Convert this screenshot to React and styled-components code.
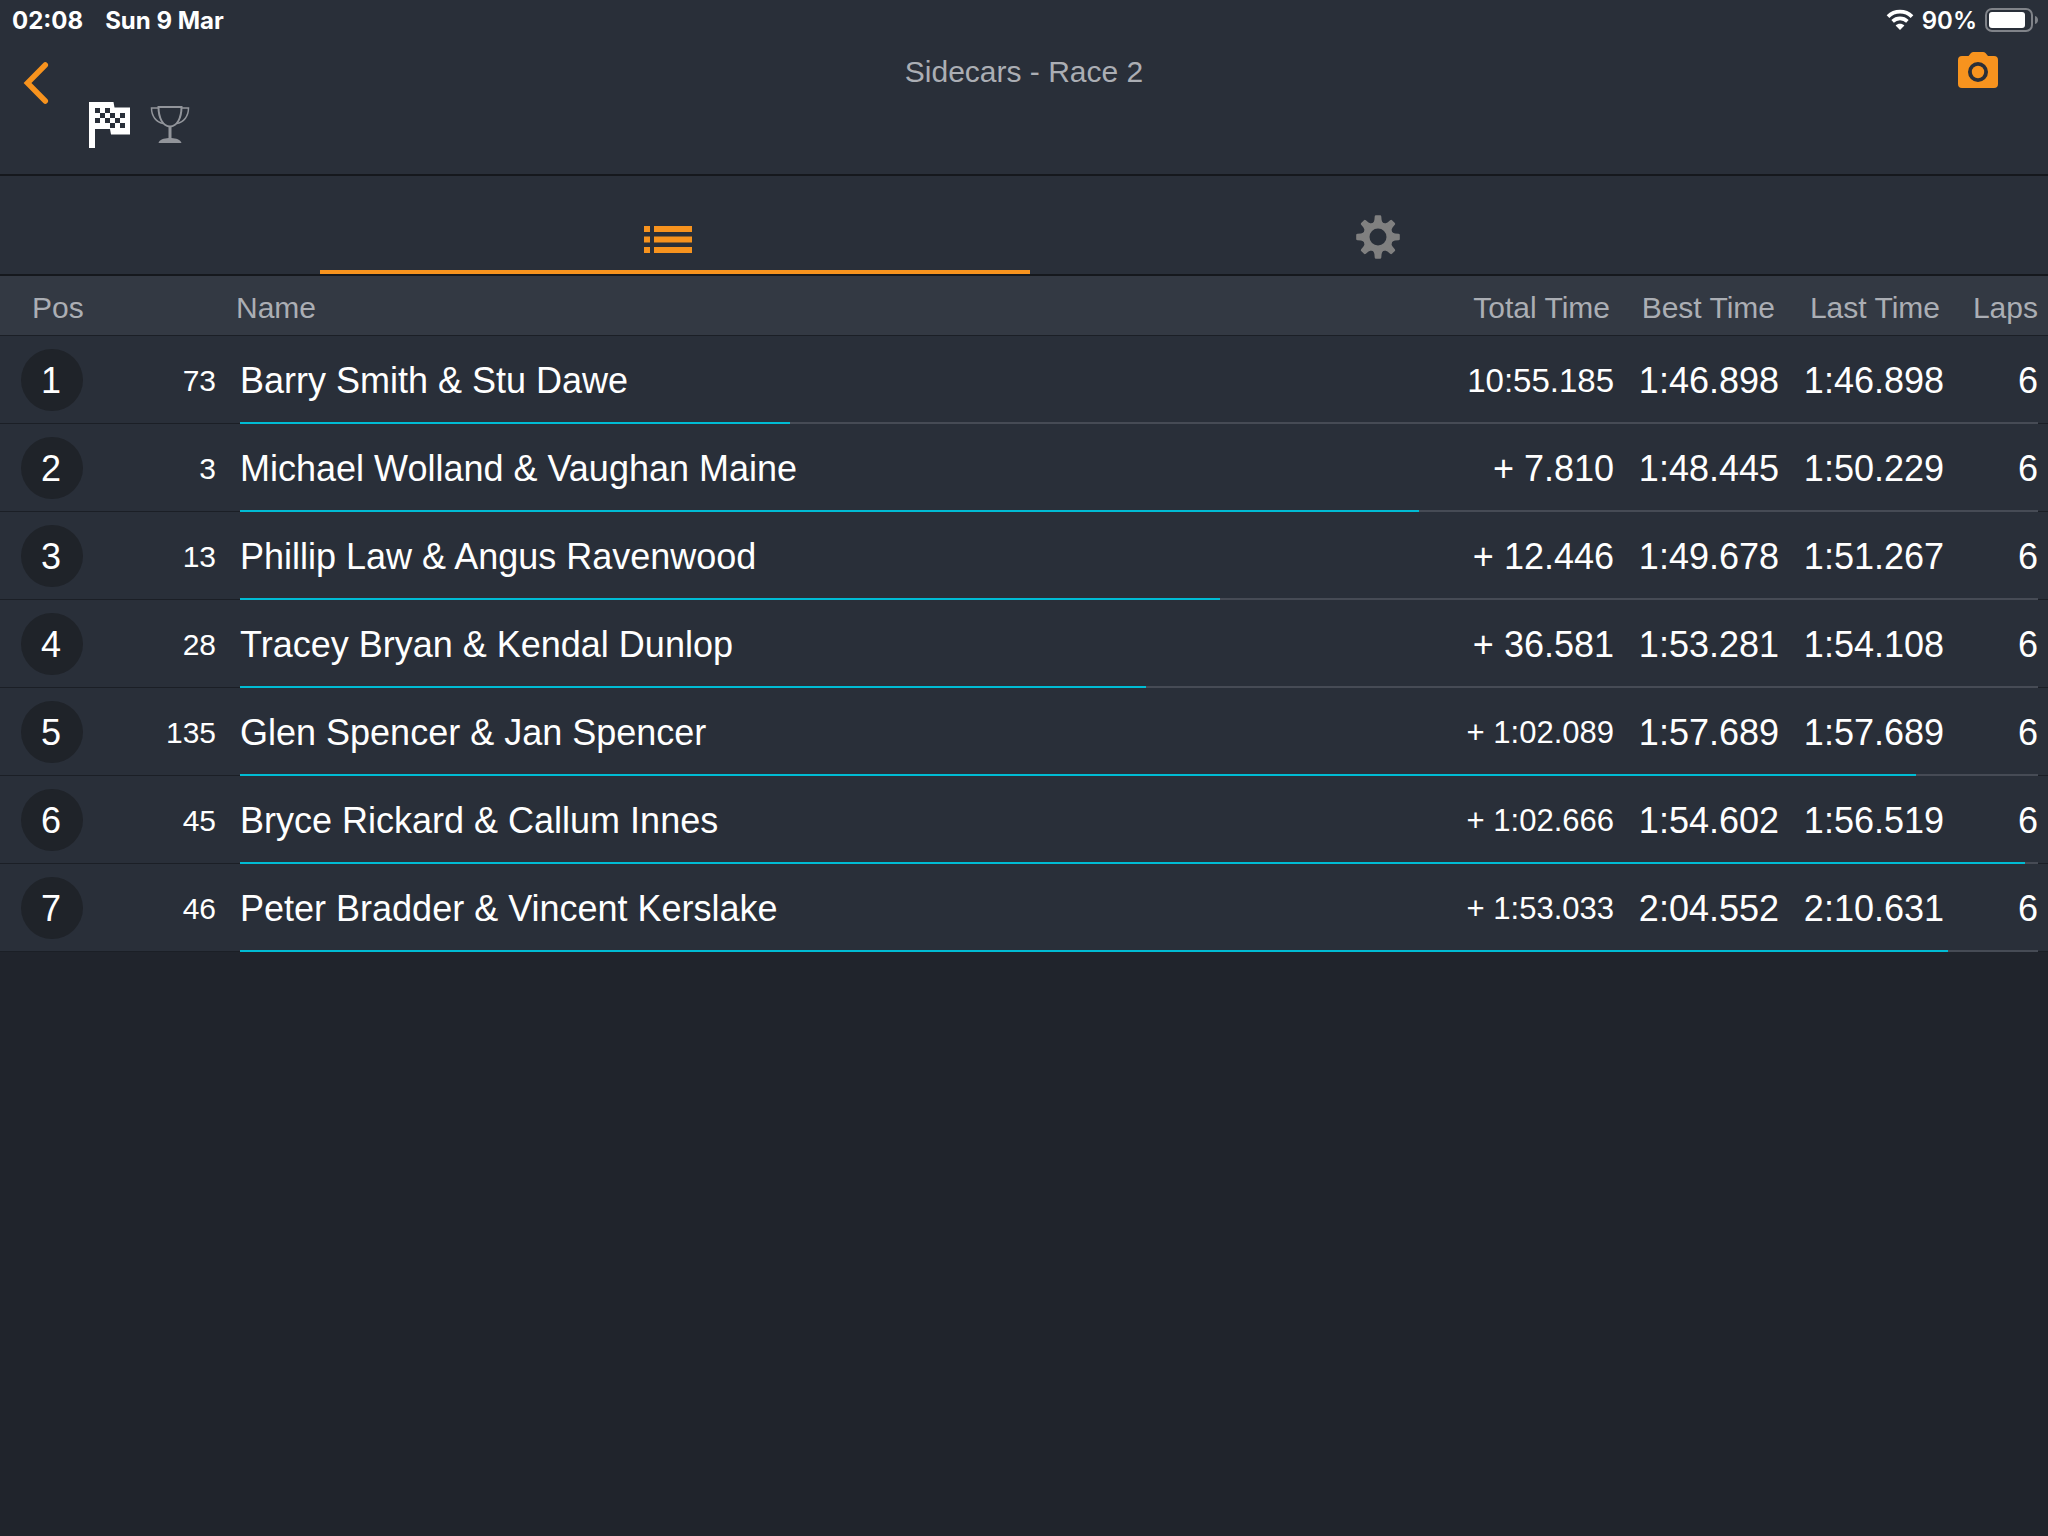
import styled, { createGlobalStyle } from "styled-components";

const results = [
  { pos: 1, no: 73, name: "Barry Smith & Stu Dawe", total: "10:55.185", best: "1:46.898", last: "1:46.898", laps: 6, progress: 30.6 },
  { pos: 2, no: 3, name: "Michael Wolland & Vaughan Maine", total: "+ 7.810", best: "1:48.445", last: "1:50.229", laps: 6, progress: 65.6 },
  { pos: 3, no: 13, name: "Phillip Law & Angus Ravenwood", total: "+ 12.446", best: "1:49.678", last: "1:51.267", laps: 6, progress: 54.5 },
  { pos: 4, no: 28, name: "Tracey Bryan & Kendal Dunlop", total: "+ 36.581", best: "1:53.281", last: "1:54.108", laps: 6, progress: 50.4 },
  { pos: 5, no: 135, name: "Glen Spencer & Jan Spencer", total: "+ 1:02.089", best: "1:57.689", last: "1:57.689", laps: 6, progress: 93.2 },
  { pos: 6, no: 45, name: "Bryce Rickard & Callum Innes", total: "+ 1:02.666", best: "1:54.602", last: "1:56.519", laps: 6, progress: 99.3 },
  { pos: 7, no: 46, name: "Peter Bradder & Vincent Kerslake", total: "+ 1:53.033", best: "2:04.552", last: "2:10.631", laps: 6, progress: 95 },
];

// longer gaps get a smaller font so they stay inside the column
const totalSize = (total) => {
  if (total.length > 9) return 31;
  if (total.length > 8) return 33;
  return 36;
};

const WifiIcon = () => (
  <svg width="28" height="22" viewBox="0 0 28 22" fill="none" aria-hidden="true">
    <path d="M2 7.6C8.7 1 19.3 1 26 7.6" stroke="#fff" strokeWidth="3.8" />
    <path d="M6.6 12.4C10.8 8.4 17.2 8.4 21.4 12.4" stroke="#fff" strokeWidth="3.6" />
    <path d="M14 21L9.6 16.6C12 14.2 16 14.2 18.4 16.6Z" fill="#fff" />
  </svg>
);

const BatteryIcon = () => (
  <svg width="54" height="24" viewBox="0 0 54 24" aria-hidden="true">
    <rect x="1" y="1" width="46" height="22" rx="6" fill="none" stroke="#808389" strokeWidth="2" />
    <rect x="4" y="4" width="36" height="16" rx="3" fill="#fff" />
    <path d="M50 8C54 9 54 15 50 16Z" fill="#808389" />
  </svg>
);

const BackIcon = () => (
  <svg width="26" height="44" viewBox="0 0 26 44" fill="none">
    <path d="M22.3 4L4.5 22L22.3 40" stroke="#f7931e" strokeWidth="5.5" strokeLinecap="round" />
  </svg>
);

const CameraIcon = () => (
  <svg width="40" height="36" viewBox="0 0 40 36">
    <path
      fill="#f7931e"
      fillRule="evenodd"
      d="M4 4H10.5L13 1Q14 0 15.500 0H25Q26.500 0 27.500 1L30 4H36A4 4 0 0 1 40 8V32A4 4 0 0 1 36 36H4A4 4 0 0 1 0 32V8A4 4 0 0 1 4 4ZM20 10A10 10 0 1 0 20 30A10 10 0 1 0 20 10Z"
    />
    <circle cx="20" cy="20" r="6.200" fill="#f7931e" />
  </svg>
);

const FlagIcon = () => (
  <svg width="41" height="46" viewBox="0 0 41 46">
    <path d="M0 0H24.500L25.500 5.500H41V32.500H22L21 27H6V46H0Z" fill="#fff" />
    <path
      fill="#292f39"
      shapeRendering="crispEdges"
      d="M6 6h5v5h-5zM16 6h5v5h-5zM11 11h5v5h-5zM21 11h5v5h-5zM31 11h5v5h-5zM6 16h5v5h-5zM16 16h5v5h-5zM26 16h5v5h-5zM21 21h5v5h-5zM31 21h5v5h-5z"
    />
  </svg>
);

const TrophyIcon = () => (
  <svg width="40" height="38" viewBox="0 0 40 38" fill="none">
    <path d="M8.500 1H31.500C31.500 12 27 20.500 20 20.500S8.500 12 8.500 1Z" stroke="#92959b" strokeWidth="2" />
    <path d="M8.500 2H1.500C1.500 10 6 16 13 17.500M31.500 2H38.500C38.500 10 34 16 27 17.500" stroke="#92959b" strokeWidth="1.500" />
    <path d="M18.500 20H21.500V32C26 32.300 30.500 33.500 31.500 37H8.500C9.500 33.500 14 32.300 18.500 32Z" fill="#92959b" />
  </svg>
);

const ListIcon = () => (
  <svg width="48" height="31" viewBox="0 -4 48 31" fill="#f7931e">
    <path d="M0 0h6v6H0zM10 0h38v6H10zM0 10.500h6v6H0zM10 10.500h38v6H10zM0 21h6v6H0zM10 21h38v6H10z" />
  </svg>
);

const GearIcon = () => (
  <svg width="44" height="44" viewBox="-22 -22 44 44">
    <g fill="#808080">
      {[0, 45, 90, 135].map((angle) => (
        <path
          key={angle}
          transform={`rotate(${angle})`}
          d="M-6 -13Q-3.800 -15 -3.600 -17L-3.300 -20.500Q-3.200 -21.800 -2 -21.800H2Q3.200 -21.800 3.300 -20.500L3.600 -17Q3.800 -15 6 -13V13Q3.800 15 3.600 17L3.300 20.500Q3.200 21.800 2 21.800H-2Q-3.200 21.800 -3.300 20.500L-3.600 17Q-3.800 15 -6 13Z"
        />
      ))}
      <circle r="15" />
    </g>
    <circle r="8.500" fill="#292f39" />
  </svg>
);

const App = () => {
  return (
    <Page>
      <GlobalStyle />
      <StatusBar>
        <span>02:08</span>
        <span>Sun 9 Mar</span>
        <StatusRight>
          <WifiIcon />
          <span>90%</span>
          <BatteryIcon />
        </StatusRight>
      </StatusBar>
      <Header>
        <HeaderSide>
          <IconButton aria-label="Back">
            <BackIcon />
          </IconButton>
          <Badges>
            <FlagIcon />
            <TrophyIcon />
          </Badges>
        </HeaderSide>
        <Title>Sidecars - Race 2</Title>
        <HeaderEnd>
          <IconButton aria-label="Take a photo">
            <CameraIcon />
          </IconButton>
        </HeaderEnd>
      </Header>
      <Tabs>
        <Tab $active aria-label="Results">
          <ListIcon />
        </Tab>
        <Tab aria-label="Settings">
          <GearIcon />
        </Tab>
      </Tabs>
      <Table>
        <colgroup>
          <Col $width={120} />
          <Col $width={120} />
          <Col />
          <Col $width={180} />
          <Col $width={165} />
          <Col $width={165} />
          <Col $width={94} />
        </colgroup>
        <thead>
          <HeadRow>
            <PosHead colSpan={2}>Pos</PosHead>
            <NameHead>
              <NameLabel>Name</NameLabel>
            </NameHead>
            <Head>Total Time</Head>
            <Head>Best Time</Head>
            <Head>Last Time</Head>
            <LapsHead>Laps</LapsHead>
          </HeadRow>
        </thead>
        <tbody>
          {results.map((r) => (
            <Row key={r.pos}>
              <PosCell>
                <Position>{r.pos}</Position>
              </PosCell>
              <NumberCell>{r.no}</NumberCell>
              <Cell>
                {r.name}
                <Track>
                  <Progress style={{ width: `${r.progress}%` }} />
                </Track>
              </Cell>
              <ValueCell $size={totalSize(r.total)}>{r.total}</ValueCell>
              <ValueCell>{r.best}</ValueCell>
              <ValueCell>{r.last}</ValueCell>
              <ValueCell>{r.laps}</ValueCell>
            </Row>
          ))}
        </tbody>
      </Table>
    </Page>
  );
};

export default App;

const GlobalStyle = createGlobalStyle`
  * {
    box-sizing: border-box;
  }
  body {
    margin: 0;
    background: #20242c;
  }
  svg {
    display: block;
  }
`;

const Page = styled.div`
  min-height: 100vh;
  background: #20242c;
  color: #fff;
  font-family: "Liberation Sans", Arial, sans-serif;
`;

const StatusBar = styled.div`
  display: flex;
  align-items: center;
  gap: 22px;
  height: 40px;
  padding: 0 9px 0 12px;
  background: #292f39;
  font-family: Inter, sans-serif;
  font-size: 24px;
  font-weight: 700;
`;
const StatusRight = styled.div`
  display: flex;
  align-items: center;
  gap: 8px;
  margin-left: auto;
  font-weight: 600;
`;

const Header = styled.header`
  display: grid;
  grid-template-columns: 1fr auto 1fr;
  align-items: start;
  height: 136px;
  background: #292f39;
  border-bottom: 2px solid #15181d;
`;
const HeaderSide = styled.div`
  display: flex;
  align-items: flex-start;
  gap: 40px;
  padding: 21px 0 0 23px;
`;
const HeaderEnd = styled.div`
  display: flex;
  justify-content: flex-end;
  padding: 12px 50px 0 0;
`;
const IconButton = styled.button`
  padding: 0;
  border: none;
  background: none;
  cursor: pointer;
`;
const Badges = styled.div`
  display: flex;
  align-items: center;
  gap: 20px;
  padding-top: 41px;
`;
const Title = styled.h1`
  margin: 0;
  padding-top: 14px;
  color: #abaeb4;
  font-size: 30px;
  font-weight: 400;
  line-height: 36px;
`;

const Tabs = styled.nav`
  display: flex;
  justify-content: center;
  height: 100px;
  padding: 0 308px 0 320px;
  background: #292f39;
  border-bottom: 2px solid #15181d;
`;
const Tab = styled.button`
  display: flex;
  flex: 1;
  align-items: center;
  justify-content: center;
  padding: 28px 14px 0 0;
  border: none;
  border-bottom: 4px solid ${(props) => (props.$active ? "#f7931e" : "transparent")};
  background: none;
  cursor: pointer;
`;

const Table = styled.table`
  width: 100%;
  table-layout: fixed;
  border-collapse: separate;
  border-spacing: 0;
`;
const Col = styled.col`
  width: ${(props) => (props.$width ? `${props.$width}px` : "auto")};
`;
const HeadRow = styled.tr`
  height: 60px;
  background: #333943;
`;
const Head = styled.th`
  padding: 4px 14px 0 0;
  border-bottom: 1px solid #1b1f26;
  color: #abaeb4;
  font-size: 30px;
  font-weight: 400;
  text-align: right;
  white-space: nowrap;
`;
const PosHead = styled(Head)`
  padding-left: 32px;
  text-align: left;
`;
const NameHead = styled(Head)`
  text-align: left;
`;
// the label starts slightly before the names below it
const NameLabel = styled.span`
  margin-left: -4px;
`;
const LapsHead = styled(Head)`
  padding-right: 10px;
`;

const Row = styled.tr`
  position: relative;
  height: 88px;
  background: #292f39;
`;
const Cell = styled.td`
  padding: 3px 0 0;
  border-bottom: 1px solid #1b1f26;
  font-size: 36px;
  white-space: nowrap;
`;
const PosCell = styled(Cell)`
  padding: 0 0 0 21px;
`;
const Position = styled.div`
  display: flex;
  align-items: center;
  justify-content: center;
  width: 62px;
  height: 62px;
  padding: 2px 2px 0 0;
  border-radius: 50%;
  background: #1f2329;
`;
const NumberCell = styled(Cell)`
  padding-right: 24px;
  font-size: 30px;
  text-align: right;
`;
const ValueCell = styled(Cell)`
  padding-right: 10px;
  font-size: ${(props) => props.$size || 36}px;
  text-align: right;
`;

const Track = styled.div`
  position: absolute;
  right: 10px;
  bottom: 0;
  left: 240px;
  height: 2px;
  background: #464b55;
`;
const Progress = styled.div`
  height: 100%;
  background: #00bcd4;
`;
